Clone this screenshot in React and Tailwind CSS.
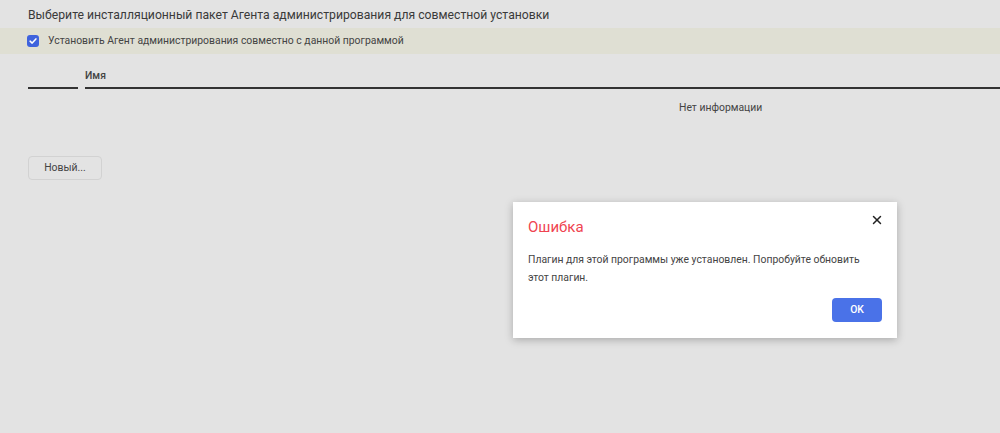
import { X } from 'lucide-react';

export default function App() {
  return (
    <div className="relative w-[1000px] h-[433px] overflow-hidden bg-[#e3e3e3] font-['Roboto',sans-serif] text-[#333]">
      <div className="h-[28px] pl-[28px] pt-[6px] text-[12.2px] leading-[18px] text-[#3a3a3a]">
        Выберите инсталляционный пакет Агента администрирования для совместной установки
      </div>

      <label className="flex h-[26px] items-center gap-[9px] bg-[#dfdfd3] pl-[27px] text-[10.4px] text-[#444]">
        <span className="flex h-[12px] w-[12px] items-center justify-center rounded-[3px] bg-[#3f63dd]">
          <svg viewBox="0 0 12 12" className="h-[10px] w-[10px]">
            <path d="M2.5 6.2 L5 8.5 L9.5 3.5" fill="none" stroke="white" strokeWidth="1.8" strokeLinecap="round" strokeLinejoin="round" />
          </svg>
        </span>
        Установить Агент администрирования совместно с данной программой
      </label>

      <div className="flex h-[35px] items-end gap-[7px] pl-[28px]">
        <div className="h-full w-[50px] border-b-2 border-[#333]" />
        <div className="flex h-full flex-1 items-end border-b-2 border-[#333] pb-[3px] text-[10.4px] font-medium text-[#444]">
          Имя
        </div>
      </div>

      <div className="flex h-[38px] items-center pl-[679px] text-[10.4px] text-[#444]">
        Нет информации
      </div>

      <div className="pl-[28px] pt-[27px]">
        <button className="h-[24px] w-[74px] rounded-[4px] border border-[#d2d2d2] text-[10.4px] text-[#444]">
          Новый...
        </button>
      </div>

      <div className="absolute left-[513px] top-[202px] w-[384px] h-[136px] bg-white shadow-[0_2px_8px_rgba(0,0,0,0.25)]">
        <div className="flex items-start justify-between pl-[15px] pr-[13px] pt-[11px]">
          <div className="pt-[4px] text-[15px] leading-[20px] text-[#ef4450]">Ошибка</div>
          <X className="h-[14px] w-[14px] text-[#222]" strokeWidth={2.5} />
        </div>
        <div className="pl-[15px] pr-[20px] pt-[14px] text-[10.4px] leading-[18px] text-[#444]">
          Плагин для этой программы уже установлен. Попробуйте обновить этот плагин.
        </div>
        <div className="flex justify-end pr-[15px] pt-[11px]">
          <button className="h-[24px] w-[50px] rounded-[4px] bg-[#4a72e8] text-[10.4px] font-medium text-white">
            OK
          </button>
        </div>
      </div>
    </div>
  );
}
